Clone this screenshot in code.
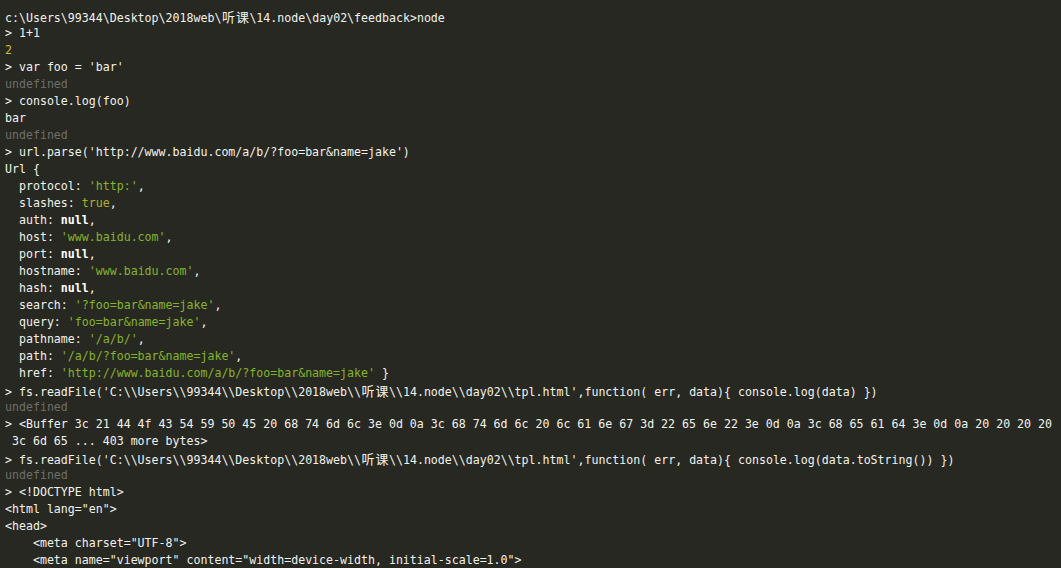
const MONO = '"DejaVu Sans Mono", "Liberation Mono", "Noto Sans CJK SC", monospace';

// colour classes for terminal tokens
const tone = {
  w: 'text-[#f2f2ec]',
  g: 'text-[#86b42b]',
  y: 'text-[#c9bf2b]',
  t: 'text-[#b3ac2a]',
  d: 'text-[#6e6e6a]',
  b: 'text-[#ffffff] font-bold',
};

function withCjk(str) {
  return str.split(/([\u4e00-\u9fff])/).map((part, i) =>
    /[\u4e00-\u9fff]/.test(part) ? (
      <span
        key={i}
        className="inline-block w-[14px] text-center text-[13px]"
        style={{ fontFamily: '"Noto Sans CJK SC", sans-serif' }}
      >
        {part}
      </span>
    ) : (
      part
    )
  );
}

const L = (...segs) => segs.map((s) => (typeof s === 'string' ? ['w', s] : s));

const readFile = (tail) =>
  L(`> fs.readFile('C:\\\\Users\\\\99344\\\\Desktop\\\\2018web\\\\听课\\\\14.node\\\\day02\\\\tpl.html',function( err, data){ ${tail} })`);

const lines = [
  L('c:\\Users\\99344\\Desktop\\2018web\\听课\\14.node\\day02\\feedback>node'),
  L('> 1+1'),
  [['y', '2']],
  L("> var foo = 'bar'"),
  [['d', 'undefined']],
  L('> console.log(foo)'),
  L('bar'),
  [['d', 'undefined']],
  L("> url.parse('http://www.baidu.com/a/b/?foo=bar&name=jake')"),
  L('Url {'),
  L('  protocol: ', ['g', "'http:'"], ','),
  L('  slashes: ', ['t', 'true'], ','),
  L('  auth: ', ['b', 'null'], ','),
  L('  host: ', ['g', "'www.baidu.com'"], ','),
  L('  port: ', ['b', 'null'], ','),
  L('  hostname: ', ['g', "'www.baidu.com'"], ','),
  L('  hash: ', ['b', 'null'], ','),
  L('  search: ', ['g', "'?foo=bar&name=jake'"], ','),
  L('  query: ', ['g', "'foo=bar&name=jake'"], ','),
  L('  pathname: ', ['g', "'/a/b/'"], ','),
  L('  path: ', ['g', "'/a/b/?foo=bar&name=jake'"], ','),
  L('  href: ', ['g', "'http://www.baidu.com/a/b/?foo=bar&name=jake'"], ' }'),
  readFile('console.log(data)'),
  [['d', 'undefined']],
  L('> <Buffer 3c 21 44 4f 43 54 59 50 45 20 68 74 6d 6c 3e 0d 0a 3c 68 74 6d 6c 20 6c 61 6e 67 3d 22 65 6e 22 3e 0d 0a 3c 68 65 61 64 3e 0d 0a 20 20 20 20'),
  L(' 3c 6d 65 ... 403 more bytes>'),
  readFile('console.log(data.toString())'),
  [['d', 'undefined']],
  L('> <!DOCTYPE html>'),
  L('<html lang="en">'),
  L('<head>'),
  L('    <meta charset="UTF-8">'),
  L('    <meta name="viewport" content="width=device-width, initial-scale=1.0">'),
];

export default function App() {
  return (
    <div className="h-[568px] w-[1061px] overflow-hidden bg-[#272822]">
      <div
        className="pl-[5px] pt-[8px] text-[11.6px] leading-[17px]"
        style={{ fontFamily: MONO }}
      >
        {lines.map((segs, i) => (
          <div key={i} className="h-[17px] whitespace-pre">
            {segs.map(([c, s], j) => (
              <span key={j} className={tone[c]}>
                {withCjk(s)}
              </span>
            ))}
          </div>
        ))}
      </div>
    </div>
  );
}
